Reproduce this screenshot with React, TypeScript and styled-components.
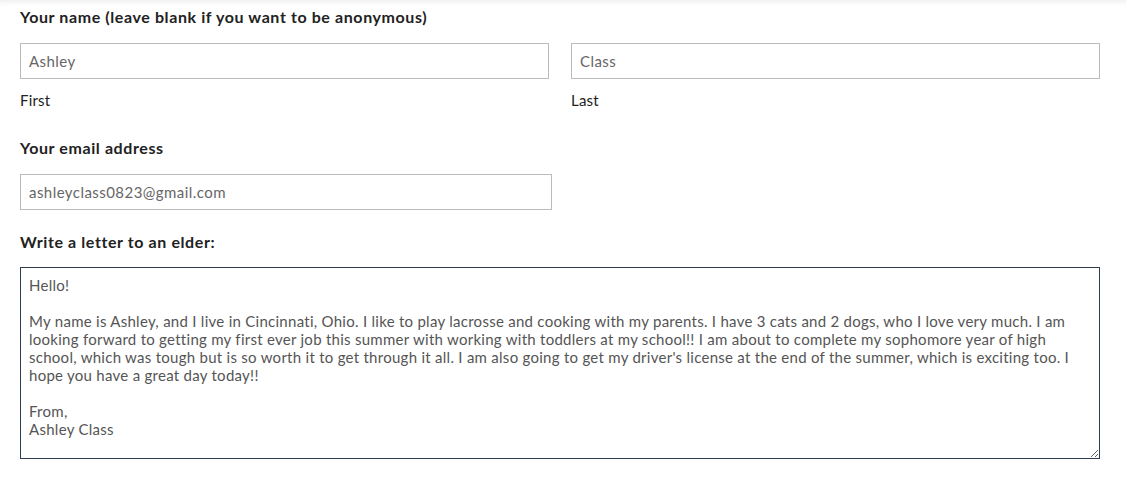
import React, { useEffect, useRef } from 'react';
import styled, { createGlobalStyle } from 'styled-components';

const GlobalStyle = createGlobalStyle`
  html, body {
    margin: 0;
    padding: 0;
    background: #ffffff;
  }
  body {
    font-family: Lato, "Open Sans", Arial, sans-serif;
    color: #222;
  }
`;

const LETTER = `Hello!

My name is Ashley, and I live in Cincinnati, Ohio. I like to play lacrosse and cooking with my parents. I have 3 cats and 2 dogs, who I love very much. I am
looking forward to getting my first ever job this summer with working with toddlers at my school!! I am about to complete my sophomore year of high
school, which was tough but is so worth it to get through it all. I am also going to get my driver's license at the end of the summer, which is exciting too. I
hope you have a great day today!!

From,
Ashley Class`;

const App = () => {
  const letterRef = useRef<HTMLTextAreaElement>(null);

  useEffect(() => {
    const el = letterRef.current;
    if (el) {
      el.focus();
      el.setSelectionRange(el.value.length, el.value.length);
    }
  }, []);

  return (
    <Page>
      <GlobalStyle />
      <Form>
        <Legend>Your name (leave blank if you want to be anonymous)</Legend>
        <NameRow>
          <Field>
            <TextInput defaultValue="Ashley" />
            <SubLabel>First</SubLabel>
          </Field>
          <Field>
            <TextInput defaultValue="Class" />
            <SubLabel>Last</SubLabel>
          </Field>
        </NameRow>

        <Legend $top={28}>Your email address</Legend>
        <EmailInput defaultValue="ashleyclass0823@gmail.com" />

        <Legend $top={22}>Write a letter to an elder:</Legend>
        <Letter ref={letterRef} defaultValue={LETTER} spellCheck={false} />
      </Form>
    </Page>
  );
};

const Page = styled.div`
  min-height: 480px;
  box-shadow: inset 0 7px 7px -7px rgba(0, 0, 0, 0.12);
`;

const Form = styled.form`
  display: flex;
  flex-direction: column;
  padding: 7px 26px 20px 20px;
`;

const Legend = styled.label<{ $top?: number }>`
  display: block;
  margin-top: ${(p) => p.$top ?? 0}px;
  font-size: 16px;
  line-height: 20px;
  font-weight: 700;
  letter-spacing: 0.6px;
  color: #222;
`;

const NameRow = styled.div`
  display: grid;
  grid-template-columns: 1fr 1fr;
  column-gap: 22px;
  margin-top: 16px;
`;

const Field = styled.div`
  display: flex;
  flex-direction: column;
`;

const TextInput = styled.input`
  box-sizing: border-box;
  width: 100%;
  height: 36px;
  padding: 0 8px;
  border: 1px solid #bbbbbb;
  border-radius: 0;
  font-family: Lato, "Open Sans", Arial, sans-serif;
  font-size: 15px;
  letter-spacing: 0.45px;
  color: #666;
  background: #fff;
  outline: none;
`;

const EmailInput = styled(TextInput)`
  width: 532px;
  margin-top: 16px;
`;

const SubLabel = styled.span`
  margin-top: 11px;
  font-size: 15px;
  line-height: 20px;
  letter-spacing: 0.2px;
  color: #222;
`;

const Letter = styled.textarea`
  box-sizing: border-box;
  width: 100%;
  height: 192px;
  margin-top: 15px;
  padding: 8px 8px;
  border: 1px solid #2c3e50;
  border-radius: 0;
  font-family: Lato, "Open Sans", Arial, sans-serif;
  font-size: 15px;
  line-height: 18px;
  letter-spacing: 0.27px;
  color: #555;
  background: #fff;
  outline: none;
  caret-color: #111;
`;

export default App;
